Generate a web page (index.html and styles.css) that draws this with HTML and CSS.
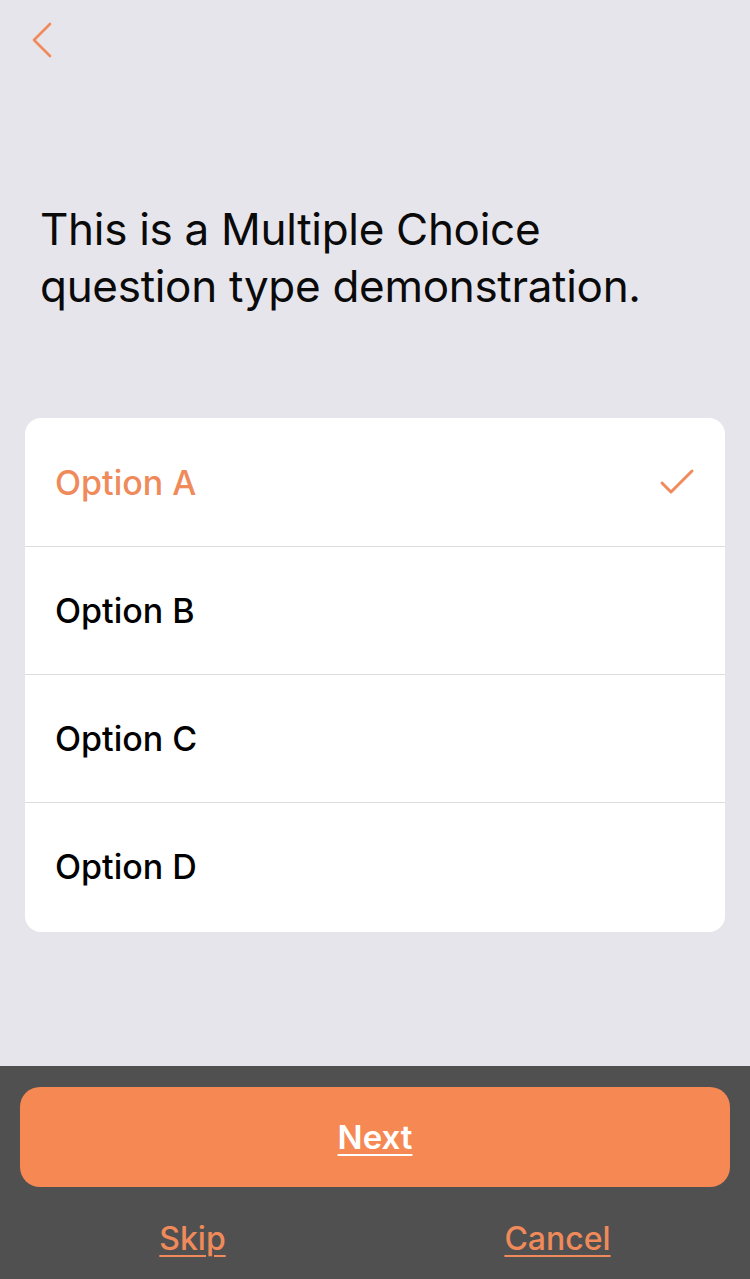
FILE: index.html
```html
<!DOCTYPE html>
<html>
<head>
<meta charset="utf-8">
<link rel="stylesheet" href="styles.css">
</head>
<body>
<div class="screen">
  <main class="content">
    <div class="nav">
      <svg class="back" width="22" height="36" viewBox="0 0 22 36"><path d="M19 2 L3 18 L19 34" fill="none" stroke="#f08a5a" stroke-width="2.6" stroke-linecap="round" stroke-linejoin="round"/></svg>
    </div>
    <h1 class="question">This is a Multiple Choice question type demonstration.</h1>
    <ul class="options">
      <li class="option selected"><span>Option A</span>
        <svg class="check" width="36" height="28" viewBox="0 0 36 28"><path d="M3 15 L12 24 L33 3" fill="none" stroke="#f08a5a" stroke-width="3" stroke-linecap="round" stroke-linejoin="round"/></svg>
      </li>
      <li class="option"><span>Option B</span></li>
      <li class="option"><span>Option C</span></li>
      <li class="option"><span>Option D</span></li>
    </ul>
  </main>
  <footer class="footer">
    <a class="next">Next</a>
    <div class="links">
      <a class="link">Skip</a>
      <a class="link">Cancel</a>
    </div>
  </footer>
</div>
</body>
</html>
```
FILE: styles.css
```css
* { box-sizing: border-box; }
html, body { margin: 0; padding: 0; }
body {
  width: 750px;
  height: 1279px;
  background: #e6e5eb;
  font-family: Inter, "Noto Sans", sans-serif;
  overflow: hidden;
}
.screen {
  display: flex;
  flex-direction: column;
  height: 1279px;
}
.content {
  flex: 1;
  display: flex;
  flex-direction: column;
}
.nav {
  height: 80px;
  padding: 22px 0 0 31px;
}
.back { display: block; }
.question {
  margin: 121px 90px 0 40px;
  font-size: 44px;
  font-weight: 400;
  line-height: 57px;
  color: #0a0a0a;
  letter-spacing: -0.3px;
}
.options {
  list-style: none;
  margin: 103px 25px 0 25px;
  padding: 0 0 2px 0;
  background: #fff;
  border-radius: 16px;
  overflow: hidden;
}
.option {
  height: 128px;
  display: flex;
  align-items: center;
  justify-content: space-between;
  padding: 0 30px 0 30px;
  font-size: 34px;
  font-weight: 500;
  color: #000;
  border-top: 1px solid #dddde1;
}
.option:first-child { border-top: none; }
.option.selected { color: #ef8a5b; }
.check { display: block; }
.footer {
  height: 213px;
  background: #505050;
  padding: 21px 20px 0 20px;
  display: flex;
  flex-direction: column;
}
.next {
  height: 100px;
  border-radius: 20px;
  background: #f68853;
  color: #fff;
  font-size: 33px;
  font-weight: 600;
  text-decoration: underline;
  text-underline-offset: 5px;
  text-decoration-thickness: 2px;
  display: flex;
  align-items: center;
  justify-content: center;
}
.links {
  display: flex;
  justify-content: center;
  gap: 165px;
  padding: 32px 0 0 0;
}
.link {
  width: 200px;
  text-align: center;
  color: #f08a5a;
  font-size: 32px;
  font-weight: 500;
  text-decoration: underline;
  text-underline-offset: 5px;
  text-decoration-thickness: 2px;
}
```
